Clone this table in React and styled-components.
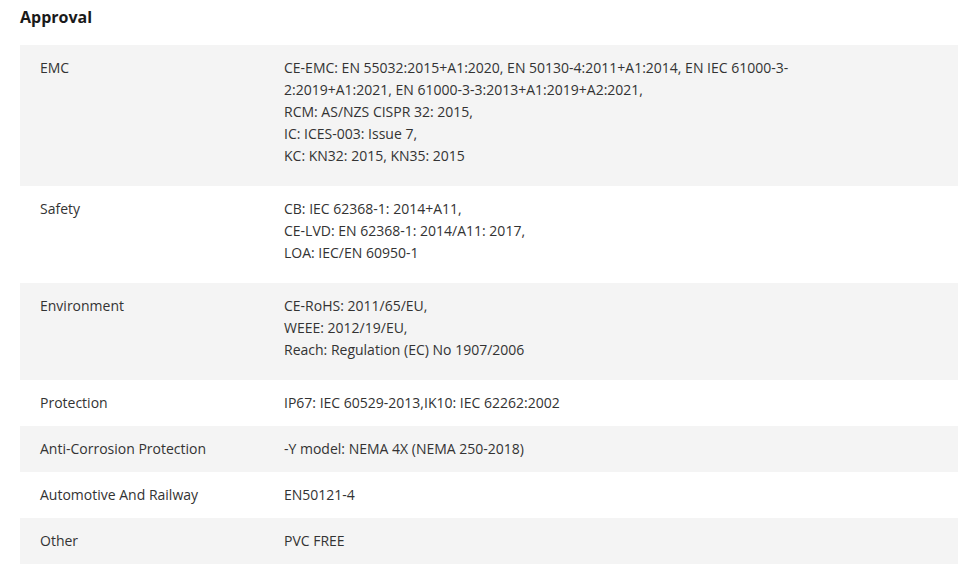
import React from 'react';
import styled, { createGlobalStyle } from 'styled-components';

const GlobalStyle = createGlobalStyle`
  body {
    margin: 0;
    background: #fff;
    font-family: "Open Sans", "Liberation Sans", sans-serif;
  }
`;

const Section = styled.div`
  padding: 6px 18px 0 20px;
`;

const Title = styled.h2`
  margin: 0 0 17px;
  font-size: 16px;
  line-height: 22px;
  font-weight: 700;
  color: #1a1a1a;
`;

const Table = styled.div`
  display: flex;
  flex-direction: column;
`;

const Row = styled.div`
  display: grid;
  grid-template-columns: 264px 1fr;
  background: ${props => (props.shaded ? '#f4f4f4' : '#fff')};
  padding: 12px 0 ${props => (props.multi ? '19px' : '12px')};
  font-size: 14px;
  line-height: 22px;
  color: #333;
`;

const Label = styled.div`
  padding-left: 20px;
`;

const Value = styled.div`
  padding-right: 20px;
`;

const specs = [
  {
    label: 'EMC',
    lines: [
      'CE-EMC: EN 55032:2015+A1:2020, EN 50130-4:2011+A1:2014, EN IEC 61000-3-',
      '2:2019+A1:2021, EN 61000-3-3:2013+A1:2019+A2:2021,',
      'RCM: AS/NZS CISPR 32: 2015,',
      'IC: ICES-003: Issue 7,',
      'KC: KN32: 2015, KN35: 2015',
    ],
  },
  {
    label: 'Safety',
    lines: ['CB: IEC 62368-1: 2014+A11,', 'CE-LVD: EN 62368-1: 2014/A11: 2017,', 'LOA: IEC/EN 60950-1'],
  },
  {
    label: 'Environment',
    lines: ['CE-RoHS: 2011/65/EU,', 'WEEE: 2012/19/EU,', 'Reach: Regulation (EC) No 1907/2006'],
  },
  { label: 'Protection', lines: ['IP67: IEC 60529-2013,IK10: IEC 62262:2002'] },
  { label: 'Anti-Corrosion Protection', lines: ['-Y model: NEMA 4X (NEMA 250-2018)'] },
  { label: 'Automotive And Railway', lines: ['EN50121-4'] },
  { label: 'Other', lines: ['PVC FREE'] },
];

export default function App() {
  return (
    <>
      <GlobalStyle />
      <Section>
        <Title>Approval</Title>
        <Table>
          {specs.map((spec, i) => (
            <Row key={spec.label} shaded={i % 2 === 0} multi={spec.lines.length > 1}>
              <Label>{spec.label}</Label>
              <Value>
                {spec.lines.map((line, j) => (
                  <div key={j}>{line}</div>
                ))}
              </Value>
            </Row>
          ))}
        </Table>
      </Section>
    </>
  );
}
